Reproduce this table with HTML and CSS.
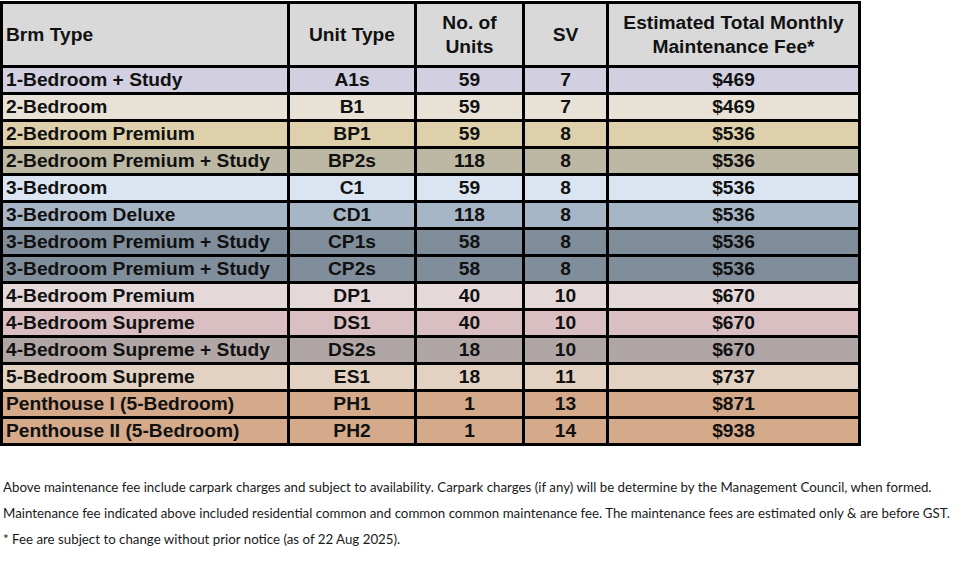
FILE: index.html
```html
<!DOCTYPE html>
<html>
<head>
<meta charset="utf-8">
<link rel="stylesheet" href="styles.css">
</head>
<body>
<table class="fees">
  <colgroup>
    <col class="c1"><col class="c2"><col class="c3"><col class="c4"><col class="c5">
  </colgroup>
  <thead>
    <tr class="head">
      <th class="left">Brm Type</th>
      <th>Unit Type</th>
      <th>No. of<br>Units</th>
      <th>SV</th>
      <th>Estimated Total Monthly<br>Maintenance Fee*</th>
    </tr>
  </thead>
  <tbody>
    <tr class="r1"><td class="left">1-Bedroom + Study</td><td>A1s</td><td>59</td><td>7</td><td>$469</td></tr>
    <tr class="r2"><td class="left">2-Bedroom</td><td>B1</td><td>59</td><td>7</td><td>$469</td></tr>
    <tr class="r3"><td class="left">2-Bedroom Premium</td><td>BP1</td><td>59</td><td>8</td><td>$536</td></tr>
    <tr class="r4"><td class="left">2-Bedroom Premium + Study</td><td>BP2s</td><td>118</td><td>8</td><td>$536</td></tr>
    <tr class="r5"><td class="left">3-Bedroom</td><td>C1</td><td>59</td><td>8</td><td>$536</td></tr>
    <tr class="r6"><td class="left">3-Bedroom Deluxe</td><td>CD1</td><td>118</td><td>8</td><td>$536</td></tr>
    <tr class="r7"><td class="left">3-Bedroom Premium + Study</td><td>CP1s</td><td>58</td><td>8</td><td>$536</td></tr>
    <tr class="r7"><td class="left">3-Bedroom Premium + Study</td><td>CP2s</td><td>58</td><td>8</td><td>$536</td></tr>
    <tr class="r9"><td class="left">4-Bedroom Premium</td><td>DP1</td><td>40</td><td>10</td><td>$670</td></tr>
    <tr class="r10"><td class="left">4-Bedroom Supreme</td><td>DS1</td><td>40</td><td>10</td><td>$670</td></tr>
    <tr class="r11"><td class="left">4-Bedroom Supreme + Study</td><td>DS2s</td><td>18</td><td>10</td><td>$670</td></tr>
    <tr class="r12"><td class="left">5-Bedroom Supreme</td><td>ES1</td><td>18</td><td>11</td><td>$737</td></tr>
    <tr class="r13"><td class="left">Penthouse I (5-Bedroom)</td><td>PH1</td><td>1</td><td>13</td><td>$871</td></tr>
    <tr class="r13"><td class="left">Penthouse II (5-Bedroom)</td><td>PH2</td><td>1</td><td>14</td><td>$938</td></tr>
  </tbody>
</table>
<div class="notes">
  <p>Above maintenance fee include carpark charges and subject to availability. Carpark charges (if any) will be determine by the Management Council, when formed.</p>
  <p>Maintenance fee indicated above included residential common and common common maintenance fee. The maintenance fees are estimated only &amp; are before GST.</p>
  <p>* Fee are subject to change without prior notice (as of 22 Aug 2025).</p>
</div>
</body>
</html>
```
FILE: styles.css
```css
html, body {
  margin: 0;
  padding: 0;
  background: #ffffff;
}
body {
  padding: 1px 0 0 0;
}
.fees {
  border-collapse: collapse;
  table-layout: fixed;
  width: 858px;
  font-family: "Liberation Sans", Arial, sans-serif;
  font-weight: bold;
  font-size: 19.2px;
  color: #111111;
  margin-left: 0;
}
.c1 { width: 287px; }
.c2 { width: 127px; }
.c3 { width: 108px; }
.c4 { width: 84px; }
.c5 { width: 252px; }
.fees th, .fees td {
  border: 3px solid #000000;
  padding: 0 1px;
  text-align: center;
  white-space: nowrap;
  overflow: hidden;
}
.fees th {
  height: 61px;
  line-height: 24px;
  background: #d9d9d9;
  font-weight: bold;
}
.fees td {
  height: 24px;
  line-height: 24px;
  padding-top: 0;
  padding-bottom: 0;
}
.fees .left {
  text-align: left;
  padding-left: 3px;
}
.r1 { background: #d2d0e0; }
.r2 { background: #e8e2d6; }
.r3 { background: #ddd0ab; }
.r4 { background: #bdb8a3; }
.r5 { background: #dbe5f1; }
.r6 { background: #a7b6c6; }
.r7 { background: #808e9b; }
.r9 { background: #e5d8d9; }
.r10 { background: #d9bfc2; }
.r11 { background: #b1a6a6; }
.r12 { background: #e3d1c1; }
.r13 { background: #d5aa8b; }
.notes {
  margin-top: 28px;
  padding-left: 3px;
  font-family: Lato, "Open Sans", sans-serif;
  font-size: 13.3px;
  color: #1a1a1a;
}
.notes p {
  margin: 0;
  line-height: 26px;
  white-space: nowrap;
}
```
